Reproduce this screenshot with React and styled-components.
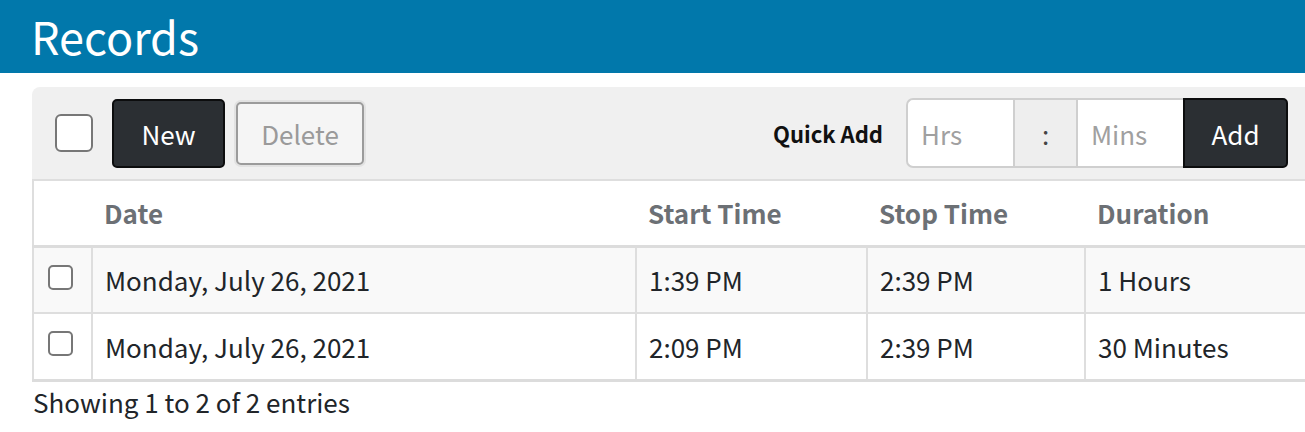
import React from "react";
import styled, { createGlobalStyle } from "styled-components";

const GlobalStyle = createGlobalStyle`
  html, body { margin: 0; padding: 0; background: #fff; overflow-x: hidden; }
  body {
    font-family: "Noto Sans CJK SC", "Source Sans Pro", "Lato", sans-serif;
    font-size: 26px;
    color: #212529;
  }
  * { box-sizing: border-box; }
`;

const Header = styled.header`
  height: 73px;
  background: #0178ab;
  display: flex;
  align-items: center;
  padding-left: 31px;
`;

const Title = styled.h1`
  margin: 0;
  color: #fff;
  font-weight: 400;
  font-size: 45px;
  line-height: 1;
  margin-top: -3px;
`;

const Card = styled.section`
  margin: 14px -20px 0 32px;
`;

const Toolbar = styled.div`
  background: #f0f0f0;
  border-radius: 8px 8px 0 0;
  height: 92px;
  display: flex;
  align-items: center;
  padding: 0 37px 0 23px;
`;

const BigCheck = styled.span`
  width: 38px;
  height: 38px;
  border: 2px solid #777;
  border-radius: 6px;
  background: #fff;
  flex: none;
`;

const Button = styled.button`
  font-family: inherit;
  font-size: 26px;
  height: ${(p) => (p.$h ? p.$h : 69)}px;
  padding: 0;
  width: ${(p) => p.$w}px;
  border-radius: ${(p) => p.$radius || "5px"};
  cursor: pointer;
  flex: none;
  ${(p) =>
    p.$variant === "dark"
      ? `background:#2b2f33;color:#fff;border:2px solid #0c0d0e;`
      : `background:#f5f5f5;color:#9a9a9a;border:2px solid #9b9b9b;box-shadow:0 0 0 2px #e2e2e2;`}
`;

const Left = styled.div`
  display: flex;
  align-items: center;
  & > :nth-child(2) { margin-left: 19px; }
  & > :nth-child(3) { margin-left: 11px; }
`;

const Right = styled.div`
  margin-left: auto;
  display: flex;
  align-items: center;
`;

const QuickLabel = styled.span`
  font-weight: 700;
  font-size: 22px;
  color: #111;
  margin-right: 23px;
`;

const Group = styled.div`
  display: flex;
  height: 70px;
`;

const Field = styled.input`
  font-family: inherit;
  font-size: 26px;
  width: ${(p) => p.$w}px;
  height: 70px;
  border: 2px solid #cfcfcf;
  border-right: none;
  border-radius: ${(p) => (p.$first ? "7px 0 0 7px" : "0")};
  padding: 0 0 0 13px;
  background: #fff;
  color: #333;
  outline: none;
  &::placeholder { color: #a0a0a0; }
`;

const Addon = styled.span`
  width: 63px;
  height: 70px;
  border: 2px solid #cfcfcf;
  border-right: none;
  background: #eeeeee;
  display: flex;
  align-items: center;
  justify-content: center;
  color: #444;
  font-size: 26px;
`;

const Table = styled.table`
  width: 100%;
  border-collapse: collapse;
  border-left: 2px solid #dedede;
  border-top: 2px solid #dedede;
  table-layout: fixed;
`;

const Th = styled.th`
  text-align: left;
  font-weight: 700;
  color: #6c7075;
  height: 66px;
  padding: 0 0 0 12px;
  border-bottom: 3px solid #dcdcdc;
  width: ${(p) => (p.$w ? `${p.$w}px` : "auto")};
`;

const Tr = styled.tr`
  background: ${(p) => (p.$striped ? "#f9f9f9" : "#fff")};
  &:last-child td { border-bottom: 3px solid #dcdcdc; }
`;

const Td = styled.td`
  height: ${(p) => p.$h}px;
  padding: 0 0 0 12px;
  border-right: 2px solid #dedede;
  border-bottom: 2px solid #dedede;
  vertical-align: middle;
  white-space: nowrap;
  &:last-child { border-right: none; }
`;

const CheckCell = styled(Td)`
  padding: 17px 0 0 14px;
  vertical-align: top;
`;

const RowCheck = styled.span`
  display: block;
  width: 25px;
  height: 25px;
  border: 2px solid #777;
  border-radius: 5px;
  background: #fff;
`;

const Footer = styled.div`
  margin: 3px 0 0 1px;
  font-size: 26px;
  line-height: 34px;
`;

const rows = [
  { date: "Monday, July 26, 2021", start: "1:39 PM", stop: "2:39 PM", dur: "1 Hours" },
  { date: "Monday, July 26, 2021", start: "2:09 PM", stop: "2:39 PM", dur: "30 Minutes" },
];

export default function App() {
  return (
    <>
      <GlobalStyle />
      <Header>
        <Title>Records</Title>
      </Header>
      <Card>
        <Toolbar>
          <Left>
            <BigCheck />
            <Button $variant="dark" $w={113}>New</Button>
            <Button $w={128} $h={63}>Delete</Button>
          </Left>
          <Right>
            <QuickLabel>Quick Add</QuickLabel>
            <Group>
              <Field $first $w={107} placeholder="Hrs" />
              <Addon>:</Addon>
              <Field $w={107} placeholder="Mins" />
              <Button $variant="dark" $w={105} $h={70} $radius="0 5px 5px 0">Add</Button>
            </Group>
          </Right>
        </Toolbar>
        <Table>
          <thead>
            <tr>
              <Th $w={59} />
              <Th $w={544}>Date</Th>
              <Th $w={231}>Start Time</Th>
              <Th $w={218}>Stop Time</Th>
              <Th>Duration</Th>
            </tr>
          </thead>
          <tbody>
            {rows.map((r, i) => (
              <Tr key={i} $striped={i === 0}>
                <CheckCell $h={67}>
                  <RowCheck />
                </CheckCell>
                <Td $h={67}>{r.date}</Td>
                <Td $h={67}>{r.start}</Td>
                <Td $h={67}>{r.stop}</Td>
                <Td $h={67}>{r.dur}</Td>
              </Tr>
            ))}
          </tbody>
        </Table>
        <Footer>Showing 1 to 2 of 2 entries</Footer>
      </Card>
    </>
  );
}
